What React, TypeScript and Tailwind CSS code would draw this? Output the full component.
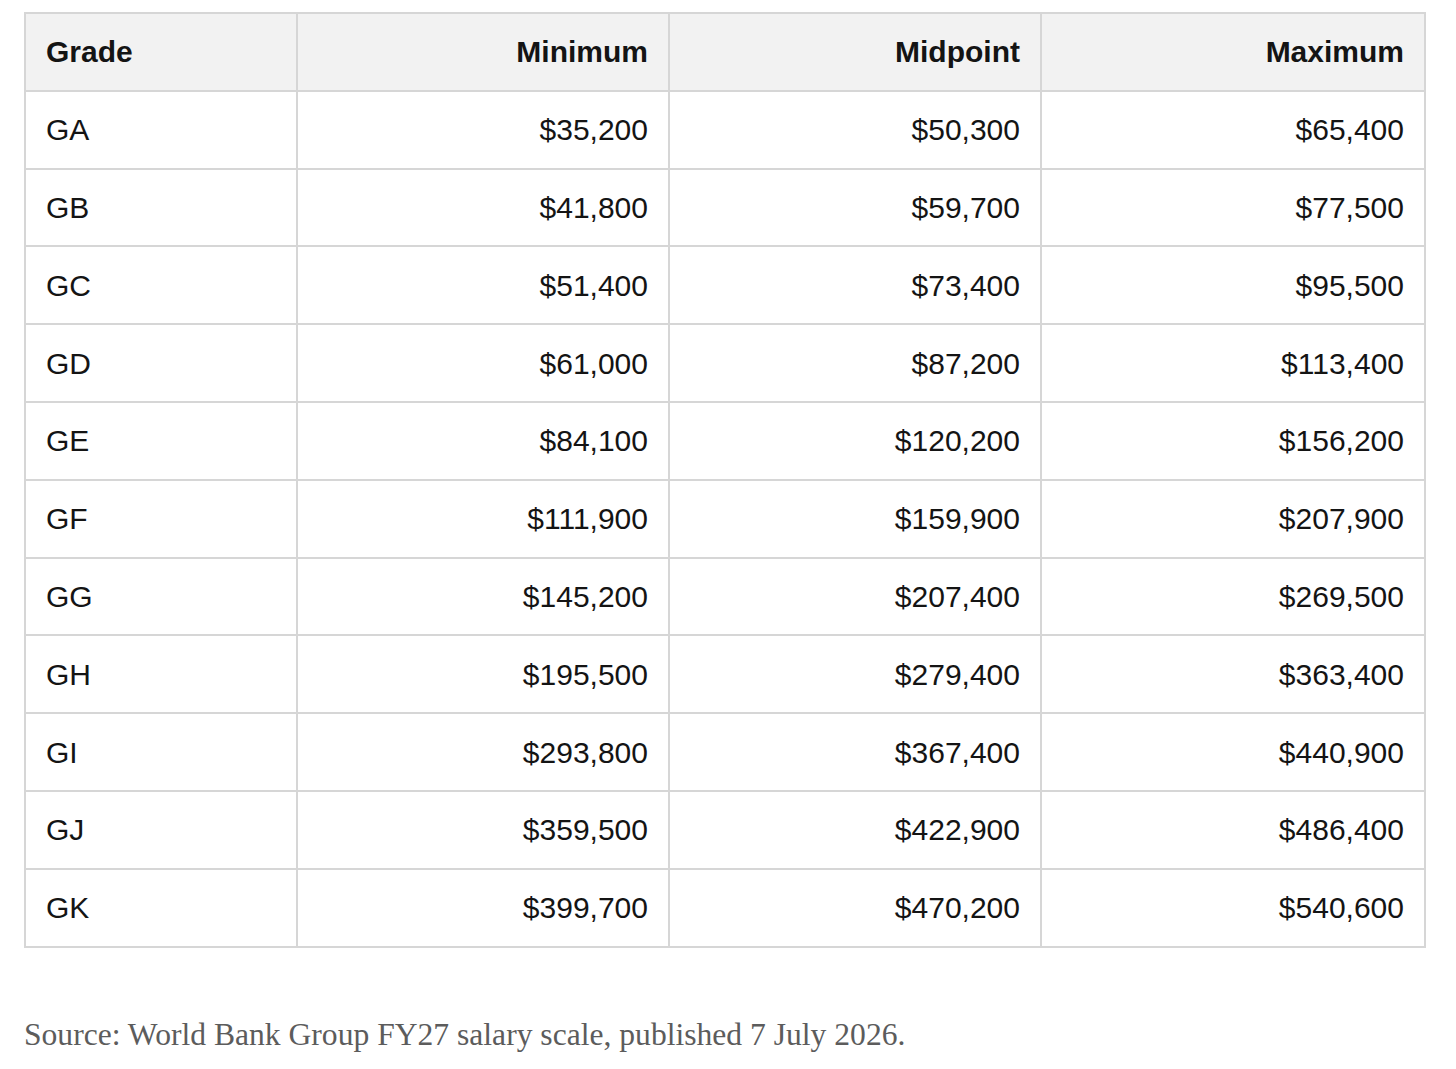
const rows: [string, string, string, string][] = [
  ['GA', '$35,200', '$50,300', '$65,400'],
  ['GB', '$41,800', '$59,700', '$77,500'],
  ['GC', '$51,400', '$73,400', '$95,500'],
  ['GD', '$61,000', '$87,200', '$113,400'],
  ['GE', '$84,100', '$120,200', '$156,200'],
  ['GF', '$111,900', '$159,900', '$207,900'],
  ['GG', '$145,200', '$207,400', '$269,500'],
  ['GH', '$195,500', '$279,400', '$363,400'],
  ['GI', '$293,800', '$367,400', '$440,900'],
  ['GJ', '$359,500', '$422,900', '$486,400'],
  ['GK', '$399,700', '$470,200', '$540,600'],
];

export default function App() {
  return (
    <div className="min-h-screen bg-white px-6 pt-3">
      <table className="w-[1400px] table-fixed border-collapse border-2 border-[#d6d6d6] font-['Liberation_Sans',Arial,sans-serif] text-[30px] text-[#141414]">
        <colgroup>
          <col className="w-[272px]" />
          <col className="w-[372px]" />
          <col className="w-[372px]" />
          <col className="w-[384px]" />
        </colgroup>
        <thead>
          <tr className="h-[77.8px] bg-[#f2f2f2]">
            <th className="border-2 border-[#d6d6d6] px-5 text-left font-bold">Grade</th>
            <th className="border-2 border-[#d6d6d6] px-5 text-right font-bold">Minimum</th>
            <th className="border-2 border-[#d6d6d6] px-5 text-right font-bold">Midpoint</th>
            <th className="border-2 border-[#d6d6d6] px-5 text-right font-bold">Maximum</th>
          </tr>
        </thead>
        <tbody>
          {rows.map((r) => (
            <tr key={r[0]} className="h-[77.8px]">
              <td className="border-2 border-[#d6d6d6] px-5 text-left">{r[0]}</td>
              <td className="border-2 border-[#d6d6d6] px-5 text-right">{r[1]}</td>
              <td className="border-2 border-[#d6d6d6] px-5 text-right">{r[2]}</td>
              <td className="border-2 border-[#d6d6d6] px-5 text-right">{r[3]}</td>
            </tr>
          ))}
        </tbody>
      </table>
      <p className="mt-[63px] font-['Liberation_Serif',Georgia,serif] text-[31.6px] text-[#5c5c5c]">
        Source: World Bank Group FY27 salary scale, published 7 July 2026.
      </p>
    </div>
  );
}
